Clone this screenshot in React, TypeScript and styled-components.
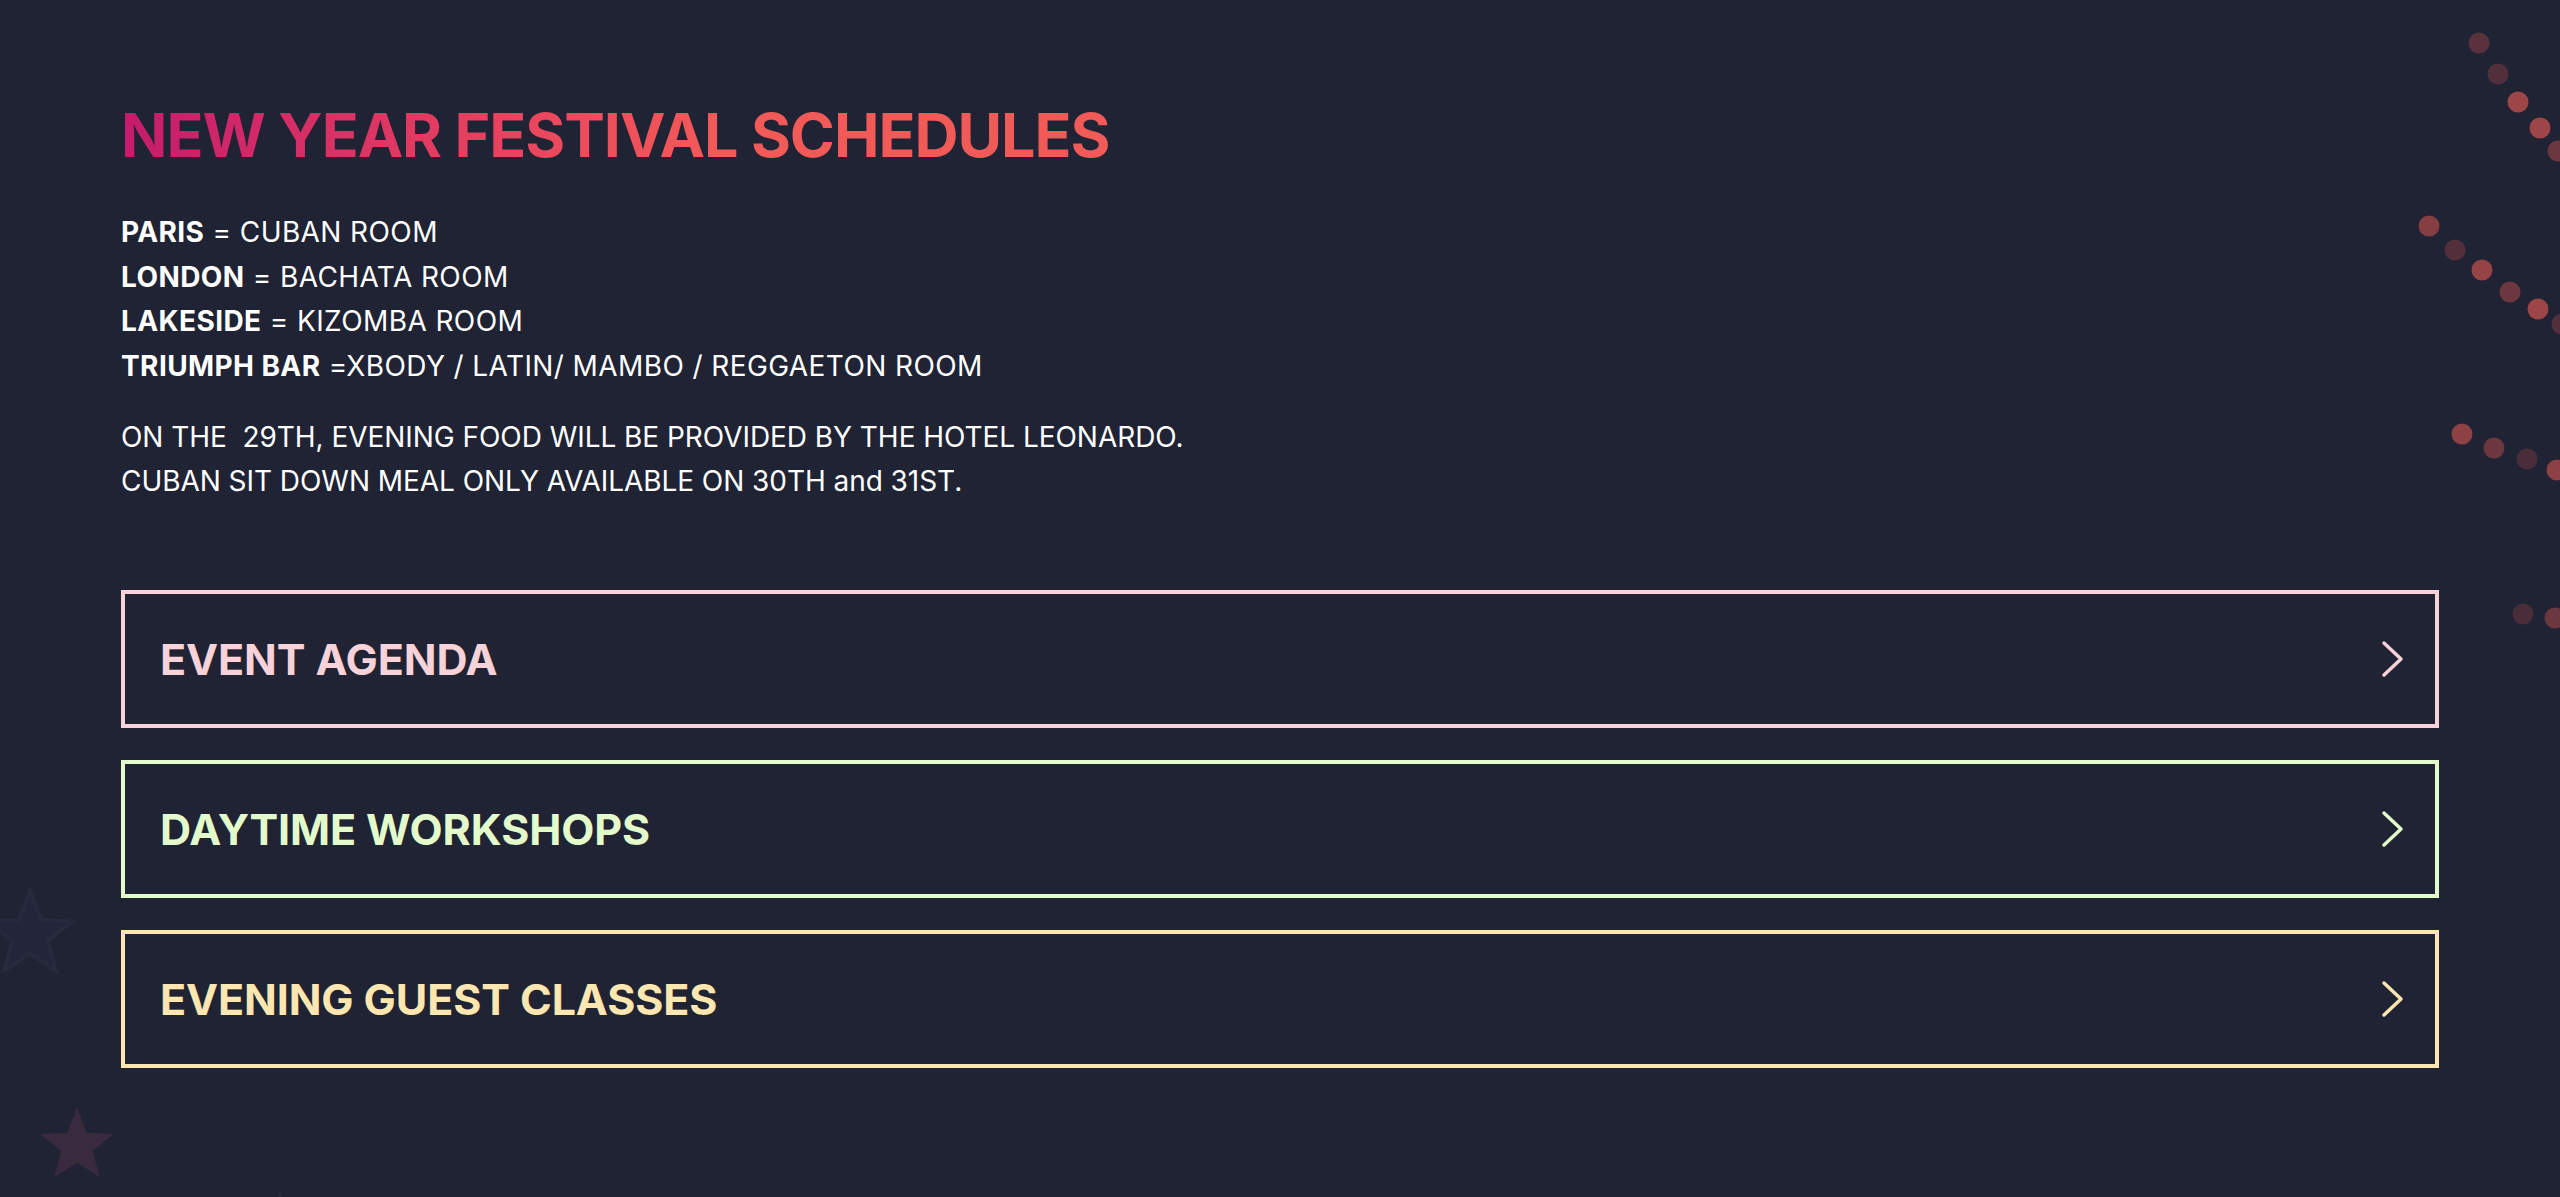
import styled, {createGlobalStyle} from "styled-components";

const GlobalStyle = createGlobalStyle`
  html, body {
    margin: 0;
    padding: 0;
    background-color: #1f2333;
  }

  * {
    box-sizing: border-box;
  }
`

const Page = styled.div`
  position: relative;
  min-height: 1197px;
  overflow: hidden;
  background-color: #1f2333;
  font-family: Inter, "Open Sans", sans-serif;
  color: #ffffff;
`

const Content = styled.main`
  position: relative;
  z-index: 1;
  padding: 99px 121px 0;
`

const Title = styled.h1`
  display: inline-block;
  margin: 0;
  font-size: 61px;
  font-weight: 700;
  line-height: 1.2;
  letter-spacing: -1.05px;
  background: linear-gradient(90deg, #c51c6c 0%, #e8425f 38%, #f25a58 60%, #f25a58 100%);
  -webkit-background-clip: text;
  background-clip: text;
  color: transparent;
`

const Rooms = styled.div`
  margin-top: 38px;
  font-size: 28px;
  line-height: 44.5px;
  letter-spacing: 0.4px;

  b {
    font-weight: 700;
  }
`

const Notes = styled.p`
  margin: 27px 0 0;
  font-size: 28px;
  line-height: 44px;
  letter-spacing: -0.05px;
`

const Cards = styled.div`
  display: flex;
  flex-direction: column;
  gap: 32px;
  margin-top: 87px;
`

const Card = styled.a<{ tone: string }>`
  display: flex;
  align-items: center;
  justify-content: space-between;
  height: 138px;
  padding: 0 29px 0 35px;
  border: 4px solid ${({tone}) => tone};
  color: ${({tone}) => tone};
  text-decoration: none;
  cursor: pointer;
`

const CardTitle = styled.span`
  font-size: 43px;
  font-weight: 700;
  letter-spacing: -0.1px;
`

const Decor = styled.svg`
  position: absolute;
  inset: 0;
  width: 100%;
  height: 100%;
  pointer-events: none;
`

const dots: [number, number, number][] = [
  [2479, 43, 0.35], [2498, 74, 0.3], [2518, 102, 0.75], [2540, 128, 0.75], [2558, 151, 0.45],
  [2429, 226, 0.6], [2455, 250, 0.3], [2482, 270, 0.7], [2510, 292, 0.45], [2538, 309, 0.75], [2562, 324, 0.3],
  [2462, 434, 0.65], [2494, 448, 0.45], [2527, 459, 0.25], [2557, 470, 0.65],
  [2523, 614, 0.25], [2555, 618, 0.45],
]

const starPoints = (cx: number, cy: number, r: number) =>
  Array.from({length: 10}, (_, i) => {
    const radius = i % 2 === 0 ? r : r * 0.42;
    const a = -Math.PI / 2 + (i * Math.PI) / 5;
    return `${(cx + radius * Math.cos(a)).toFixed(1)},${(cy + radius * Math.sin(a)).toFixed(1)}`;
  }).join(" ");

function Chevron() {
  return (
    <svg width="26" height="40" viewBox="0 0 26 40" fill="none">
      <polyline
        points="4,4 21,20 4,36"
        stroke="currentColor"
        strokeWidth="3.5"
        strokeLinecap="round"
        strokeLinejoin="round"
      />
    </svg>
  )
}

const sections = [
  {title: "EVENT AGENDA", tone: "#f7d2d8"},
  {title: "DAYTIME WORKSHOPS", tone: "#e3fbcb"},
  {title: "EVENING GUEST CLASSES", tone: "#fde6b0"},
]

export default function App() {
  return (
    <Page>
      <GlobalStyle/>
      <Decor viewBox="0 0 2560 1197" preserveAspectRatio="xMinYMin slice">
        {dots.map(([x, y, o], i) => (
          <circle key={i} cx={x} cy={y} r={10.5} fill="#c9514f" opacity={o}/>
        ))}
        <polygon points={starPoints(77, 1146, 39)} fill="#3a2a3d"/>
        <polygon points={starPoints(30, 935, 44)} fill="#23263a" stroke="#272a3c" strokeWidth="4"/>
        <polygon points={starPoints(280, 1205, 14)} fill="#282b3d"/>
      </Decor>
      <Content>
        <Title>NEW YEAR FESTIVAL SCHEDULES</Title>
        <Rooms>
          <div><b>PARIS</b> = CUBAN ROOM</div>
          <div><b>LONDON</b> = BACHATA ROOM</div>
          <div><b>LAKESIDE</b> = KIZOMBA ROOM</div>
          <div><b>TRIUMPH BAR</b> =XBODY / LATIN/ MAMBO / REGGAETON ROOM</div>
        </Rooms>
        <Notes>
          ON THE &nbsp;29TH, EVENING FOOD WILL BE PROVIDED BY THE HOTEL LEONARDO.<br/>
          CUBAN SIT DOWN MEAL ONLY AVAILABLE ON 30TH and 31ST.
        </Notes>
        <Cards>
          {sections.map(s => (
            <Card key={s.title} tone={s.tone}>
              <CardTitle>{s.title}</CardTitle>
              <Chevron/>
            </Card>
          ))}
        </Cards>
      </Content>
    </Page>
  )
}
